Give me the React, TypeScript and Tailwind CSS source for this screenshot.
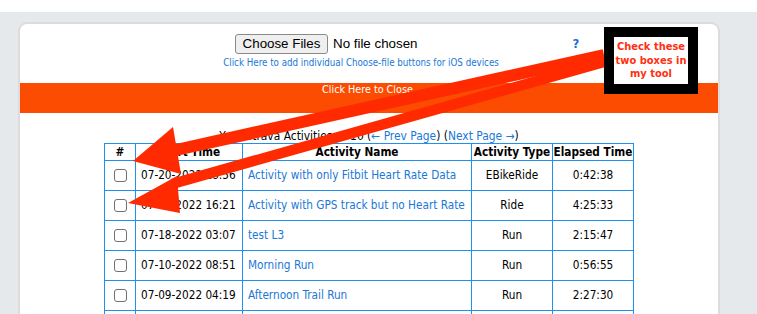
import React from "react";

const rows = [
  { date: "07-20-2022 18:56", name: "Activity with only Fitbit Heart Rate Data", type: "EBikeRide", time: "0:42:38" },
  { date: "07-19-2022 16:21", name: "Activity with GPS track but no Heart Rate", type: "Ride", time: "4:25:33" },
  { date: "07-18-2022 03:07", name: "test L3", type: "Run", time: "2:15:47" },
  { date: "07-10-2022 08:51", name: "Morning Run", type: "Run", time: "0:56:55" },
  { date: "07-09-2022 04:19", name: "Afternoon Trail Run", type: "Run", time: "2:27:30" },
];

const cell = "h-[30px] border border-[#2090f0]";

export default function App() {
  return (
    <div className="relative w-[757px] h-[314px] overflow-hidden bg-white font-['DejaVu_Sans_Condensed','DejaVu_Sans',sans-serif] [font-stretch:condensed]">
      <div className="mt-[12px] h-[302px] bg-[#e6e9ec] pt-[10px] pl-[18px]">
        <div className="w-[702px] h-[400px] rounded-t-[9px] border-2 border-[#dcdcdc] bg-white">
          <div className="pt-[10px]">
            <div className="flex items-center h-[20px] ml-[215px]">
              <button className="h-[20px] w-[93px] rounded-[3px] border border-[#8a8a8a] bg-[#efefef] text-[13.33px] text-black font-['Liberation_Sans',Arial,sans-serif] [font-stretch:normal] leading-none">
                Choose Files
              </button>
              <span className="ml-[5px] text-[13.33px] text-black font-['Liberation_Sans',Arial,sans-serif] [font-stretch:normal]">
                No file chosen
              </span>
              <span className="ml-[155px] text-[13px] font-bold text-[#1a6fd0]">?</span>
            </div>
            <div className="mt-[3px] w-[682px] text-center text-[9.7px] leading-[12px] text-[#1a78d6]">
              Click Here to add individual Choose-file buttons for iOS devices
            </div>
          </div>
          <div className="mt-[14px] h-[30px] bg-[#fc4c02] text-center text-[10.7px] leading-[14px] text-white">
            Click Here to Close.
          </div>
          <div className="mt-[16px] text-center text-[11.9px] leading-[14px] text-black">
            Your Strava Activities: 1-10 (<span className="text-[#1a78d6]">← Prev Page</span>) (
            <span className="text-[#1a78d6]">Next Page →</span>)
          </div>
          <table className="mx-auto w-[529px] table-fixed border-collapse text-[11.7px] text-black">
            <colgroup>
              <col className="w-[31px]" />
              <col className="w-[107px]" />
              <col className="w-[229px]" />
              <col className="w-[81px]" />
              <col className="w-[81px]" />
            </colgroup>
            <thead>
              <tr>
                {["#", "Start Time", "Activity Name", "Activity Type", "Elapsed Time"].map((h) => (
                  <th key={h} className="h-[17px] border border-[#2090f0] p-0 text-center font-bold leading-[15px] whitespace-nowrap">
                    {h}
                  </th>
                ))}
              </tr>
            </thead>
            <tbody>
              {rows.map((r) => (
                <tr key={r.date}>
                  <td className={`${cell} p-0 text-center align-middle`}>
                    <input
                      type="checkbox"
                      className="appearance-none block mx-auto w-[13px] h-[13px] rounded-[3px] border border-[#707070] bg-white"
                    />
                  </td>
                  <td className={`${cell} px-[5px] whitespace-nowrap`}>{r.date}</td>
                  <td className={`${cell} px-[5px] whitespace-nowrap text-[#1a78d6]`}>{r.name}</td>
                  <td className={`${cell} text-center`}>{r.type}</td>
                  <td className={`${cell} text-center`}>{r.time}</td>
                </tr>
              ))}
              <tr>
                <td className={cell}></td>
                <td className={cell}></td>
                <td className={cell}></td>
                <td className={cell}></td>
                <td className={cell}></td>
              </tr>
            </tbody>
          </table>
        </div>
      </div>

      <svg className="pointer-events-none absolute left-0 top-0" width="757" height="314" viewBox="0 0 757 314">
        <line x1="604" y1="55" x2="176" y2="150" stroke="#ff2a00" strokeWidth="12" />
        <polygon points="133,161 173,127 181,174" fill="#ff2a00" />
        <line x1="604" y1="62" x2="172" y2="184" stroke="#ff2a00" strokeWidth="10.5" />
        <polygon points="128,203 177,176 180,213" fill="#ff2a00" />
      </svg>

      <div className="absolute left-[604px] top-[27px] flex h-[67px] w-[94px] items-center justify-center border-[10px] border-black bg-white text-center text-[11px] font-bold leading-[13.5px] text-[#ff3010]">
        <div>
          Check these
          <br />
          two boxes in
          <br />
          my tool
        </div>
      </div>
    </div>
  );
}
